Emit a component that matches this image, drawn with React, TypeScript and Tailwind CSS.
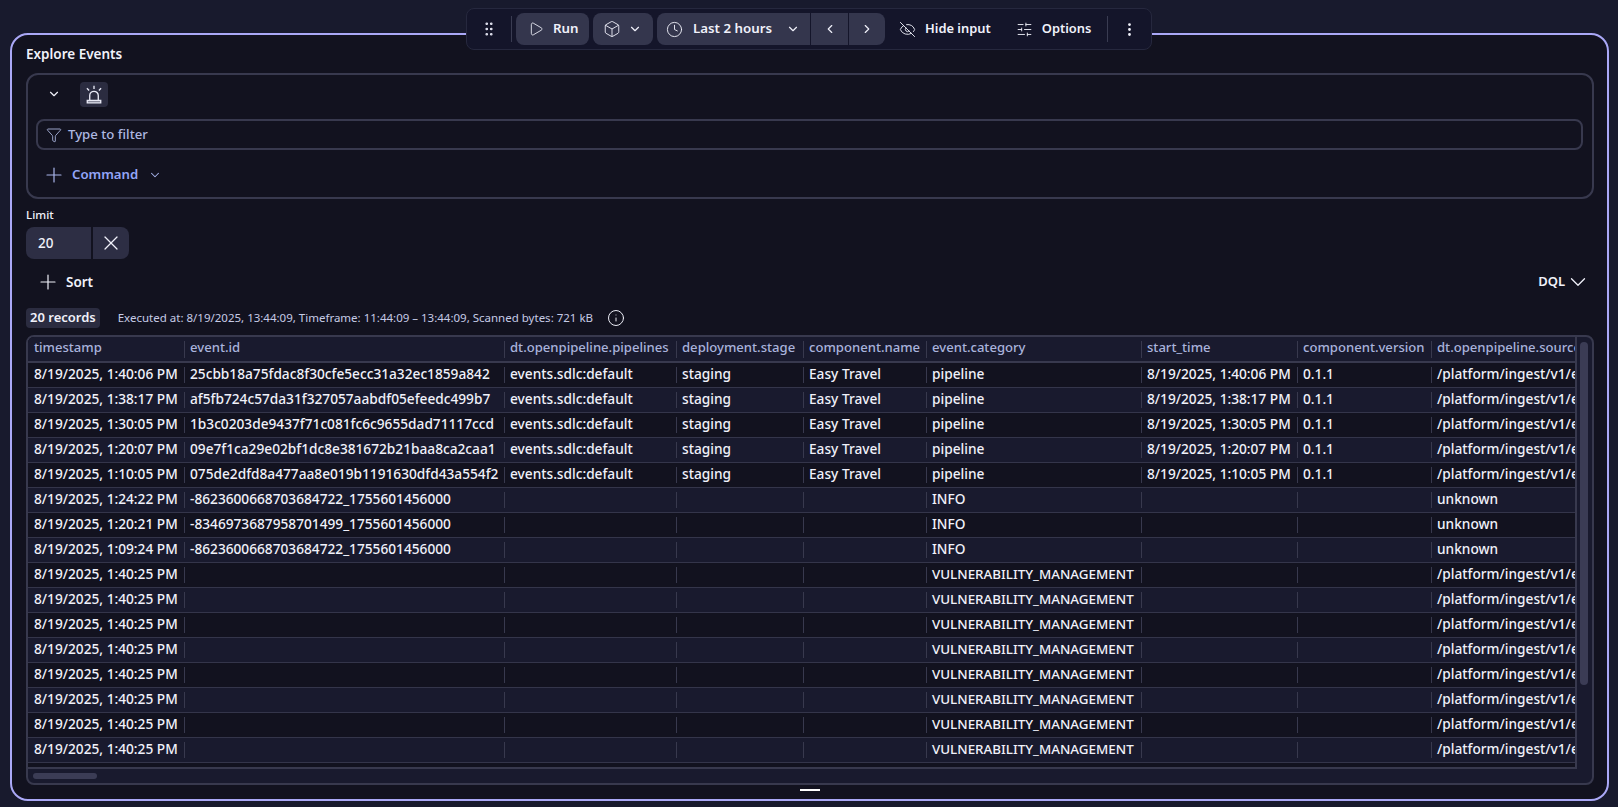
import React from "react";
import { Play, Box, Clock, ChevronDown, ChevronLeft, ChevronRight, EyeOff, SlidersHorizontal, EllipsisVertical, Funnel, Plus, X, Info, GripVertical } from "lucide-react";

const GRID = "grid grid-cols-[156px_320px_172px_127px_123px_215px_156px_134px_200px]";
const HEAD = ["timestamp", "event.id", "dt.openpipeline.pipelines", "deployment.stage", "component.name", "event.category", "start_time", "component.version", "dt.openpipeline.source"];
const SRC = "/platform/ingest/v1/events";
const sdlc = (t: string, id: string) => [t, id, "events.sdlc:default", "staging", "Easy Travel", "pipeline", t, "0.1.1", SRC];
const info = (t: string, id: string) => [t, id, "", "", "", "INFO", "", "", "unknown"];
const vul = () => ["8/19/2025, 1:40:25 PM", "", "", "", "", "VULNERABILITY_MANAGEMENT", "", "", SRC];
const ROWS: string[][] = [
  sdlc("8/19/2025, 1:40:06 PM", "25cbb18a75fdac8f30cfe5ecc31a32ec1859a842"),
  sdlc("8/19/2025, 1:38:17 PM", "af5fb724c57da31f327057aabdf05efeedc499b7"),
  sdlc("8/19/2025, 1:30:05 PM", "1b3c0203de9437f71c081fc6c9655dad71117ccd"),
  sdlc("8/19/2025, 1:20:07 PM", "09e7f1ca29e02bf1dc8e381672b21baa8ca2caa1"),
  sdlc("8/19/2025, 1:10:05 PM", "075de2dfd8a477aa8e019b1191630dfd43a554f2"),
  info("8/19/2025, 1:24:22 PM", "-8623600668703684722_1755601456000"),
  info("8/19/2025, 1:20:21 PM", "-8346973687958701499_1755601456000"),
  info("8/19/2025, 1:09:24 PM", "-8623600668703684722_1755601456000"),
  vul(), vul(), vul(), vul(), vul(), vul(), vul(), vul(),
];

function Siren() {
  return (
    <svg width="22" height="22" viewBox="0 0 18 18" fill="none" stroke="#e8e9f5" strokeWidth="1.1">
      <path d="M5.5 13V9.5a3.5 3.5 0 0 1 7 0V13" />
      <path d="M3.5 13.5h11v2h-11z" fill="#e8e9f5" fillOpacity="0.35" />
      <path d="M9 1.5v2.5M3.2 3.5l1.8 1.8M14.8 3.5L13 5.3" />
    </svg>
  );
}

export default function App() {
  return (
    <div className="relative h-[807px] w-[1618px] overflow-hidden bg-[#181a2d] pt-[33px] pl-[10px] text-[14px] text-[#f0f1fa] [font-family:'Noto_Sans',sans-serif]">
      {/* floating toolbar */}
      <div className="absolute left-[466px] top-[8px] z-10 flex h-[42px] w-[686px] items-center rounded-lg border border-[#26283e] bg-[#14152a] pl-[5px] text-[13.3px] font-semibold">
        <GripVertical size={18} strokeWidth={1.6} className="ml-[8px] text-[#e6e7f4]" />
        <div className="ml-[13px] mr-[4px] h-[26px] w-px bg-[#3a3c52]" />
        <div className="flex h-[32px] w-[73px] items-center rounded-lg bg-[#34364d] pl-[12px]">
          <Play size={16} strokeWidth={1.3} />
          <span className="ml-[9px]">Run</span>
        </div>
        <div className="ml-[4px] flex h-[32px] w-[60px] items-center rounded-lg bg-[#34364d] pl-[10px]">
          <Box size={18} strokeWidth={1.2} />
          <ChevronDown size={14} className="ml-[7px]" />
        </div>
        <div className="ml-[4px] flex h-[32px] w-[153px] items-center rounded-l-lg bg-[#34364d] pl-[9px]">
          <Clock size={17} strokeWidth={1.3} />
          <span className="ml-[10px]">Last 2 hours</span>
          <ChevronDown size={14} className="ml-[14px]" />
        </div>
        <div className="ml-[1px] flex h-[32px] w-[37px] items-center justify-center bg-[#34364d]"><ChevronLeft size={14} /></div>
        <div className="ml-[1px] flex h-[32px] w-[36px] items-center justify-center rounded-r-lg bg-[#34364d]"><ChevronRight size={14} /></div>
        <EyeOff size={17} strokeWidth={1.3} className="ml-[14px]" />
        <span className="ml-[9px] text-[12.9px]">Hide input</span>
        <SlidersHorizontal size={17} strokeWidth={1.3} className="ml-[25px]" />
        <span className="ml-[9px] text-[12.9px]">Options</span>
        <div className="ml-[16px] h-[26px] w-px bg-[#3a3c52]" />
        <EllipsisVertical size={17} className="ml-[13px]" />
      </div>

      {/* panel */}
      <div className="relative flex h-[768px] w-[1599px] flex-col rounded-[18px] border-2 border-[#aaa8f6] bg-[#12121f] pl-[14px] pr-[13px] pt-[9px]">
        <div className="h-[20px] text-[13.5px] font-semibold leading-[20px]">Explore Events</div>

        <div className="mt-[9px] h-[126px] w-full shrink-0 rounded-xl border-2 border-[#38394e] pl-[8px] pr-[9px]">
          <div className="flex h-[44px] items-start pt-[7px]">
            <ChevronDown size={14} strokeWidth={2} className="ml-[11px] mt-[5px]" />
            <div className="ml-[19px] flex h-[25px] w-[28px] items-center justify-center rounded bg-[#2b2c40]"><Siren /></div>
          </div>
          <div className="flex h-[31px] items-center rounded-lg border-2 border-[#38394e] pl-[8px] text-[13.2px] font-medium text-[#aeb8e2]">
            <Funnel size={16} strokeWidth={1.3} />
            <span className="ml-[6px]">Type to filter</span>
          </div>
          <div className="flex h-[47px] items-center pl-[6px] pt-[2px] text-[13.2px] font-semibold text-[#93a5f8]">
            <Plus size={24} strokeWidth={1.2} className="text-[#a9b5ec]" />
            <span className="ml-[6px]">Command</span>
            <ChevronDown size={14} strokeWidth={1.8} className="ml-[10px] text-[#a9b5ec]" />
          </div>
        </div>

        <div className="mt-[7px] h-[18px] text-[11.5px] font-medium leading-[18px]">Limit</div>
        <div className="mt-[3px] flex h-[32px] w-[103px] shrink-0">
          <div className="flex w-[65px] items-center rounded-l-lg bg-[#2d2e44] pl-[12px] text-[13.5px] font-medium">20</div>
          <div className="ml-[2px] flex w-[36px] items-center justify-center rounded-r-lg bg-[#2d2e44]"><X size={24} strokeWidth={1.2} /></div>
        </div>

        <div className="mt-[9px] flex h-[28px] shrink-0 items-center justify-between pl-[10px] pr-[3px] text-[13.5px] font-semibold">
          <div className="flex items-center">
            <Plus size={24} strokeWidth={1.2} />
            <span className="ml-[6px]">Sort</span>
          </div>
          <div className="flex items-center">
            <span className="text-[13px]">DQL</span>
            <ChevronDown size={26} strokeWidth={1.2} />
          </div>
        </div>

        <div className="mt-[12px] flex h-[20px] shrink-0 items-center">
          <div className="flex h-[20px] items-center rounded bg-[#2b2c40] px-[4px] text-[13px] font-semibold">20 records</div>
          <span className="ml-[18px] text-[11.5px] text-[#c6cbe6]">Executed at: 8/19/2025, 13:44:09, Timeframe: 11:44:09 – 13:44:09, Scanned bytes: 721 kB</span>
          <Info size={18} strokeWidth={1.3} className="ml-[14px]" />
        </div>

        <div className="mt-[7px] flex h-[450px] shrink-0 flex-col overflow-hidden rounded-lg border-2 border-[#38394e] bg-[#191a2e]">
          <div className="flex min-h-0 flex-1">
            <div className="w-[1549px] shrink-0 overflow-hidden border-b-2 border-r-2 border-[#38394e] bg-[#12121f]">
              <div className={`${GRID} h-[26px] border-b-2 border-[#38394e] bg-[#191a2e] text-[13.1px] font-medium text-[#a9b3dc]`}>
                {HEAD.map((h, i) => (
                  <div key={h} className="flex h-[24px] items-center overflow-hidden whitespace-nowrap">
                    {i > 0 && <div className="mr-[5px] h-[17px] w-px shrink-0 bg-[#38394e]" />}
                    <span className={i === 0 ? "mb-[2px] ml-[6px]" : "mb-[2px]"}>{h}</span>
                  </div>
                ))}
              </div>
              {ROWS.map((r, ri) => (
                <div key={ri} className={`${GRID} h-[25px] border-b border-[#34354a] text-[13.7px] font-medium ${ri % 2 ? "bg-[#191a2e]" : "bg-[#12121f]"}`}>
                  {r.map((c, i) => (
                    <div key={i} className="flex h-[24px] items-center overflow-hidden whitespace-nowrap">
                      {i > 0 && <div className="mr-[5px] h-[16px] w-px shrink-0 bg-[#38394e]" />}
                      <span className={i === 0 ? "mb-[2px] ml-[6px]" : i === 5 && c.length > 10 ? "mb-[2px] text-[13.4px]" : "mb-[2px]"}>{c}</span>
                    </div>
                  ))}
                </div>
              ))}
            </div>
            <div className="flex-1 pl-[3px] pt-[5px]">
              <div className="h-[343px] w-[8px] rounded bg-[#3b3c55]" />
            </div>
          </div>
          <div className="flex h-[14px] shrink-0 items-center pl-[5px]">
            <div className="h-[6px] w-[64px] rounded-full bg-[#3b3c55]" />
          </div>
        </div>

        <div className="absolute bottom-[8px] left-[788px] h-[2px] w-[20px] bg-white" />
      </div>
    </div>
  );
}
